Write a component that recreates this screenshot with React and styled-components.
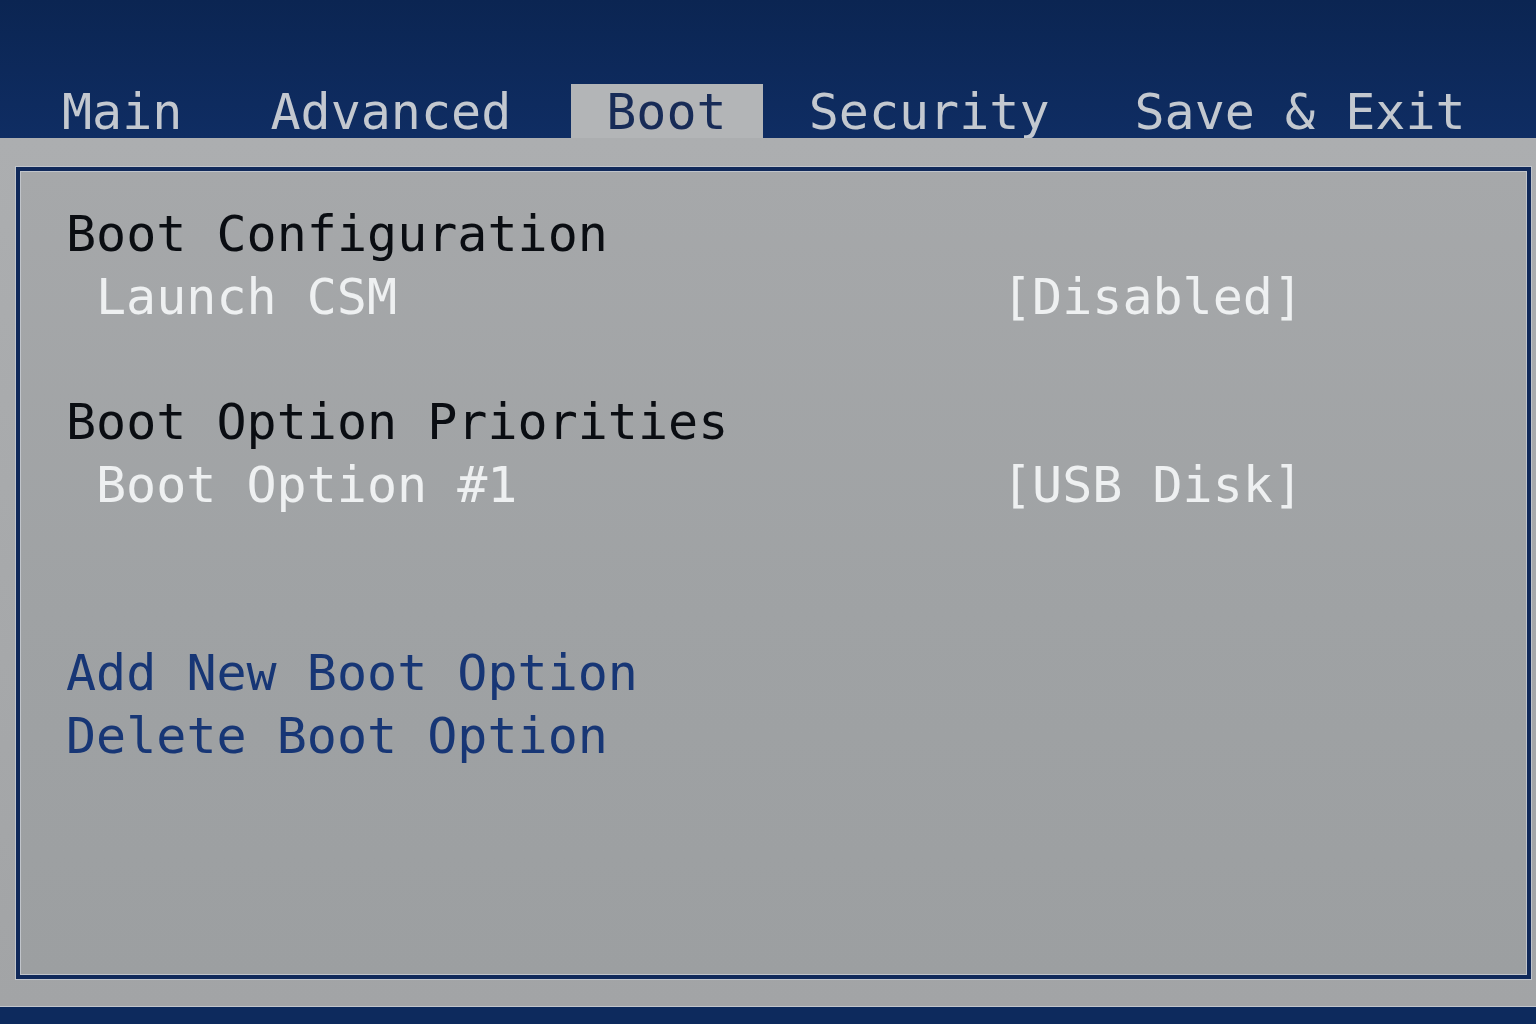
import React from 'react';
import styled, { createGlobalStyle } from 'styled-components';

const GlobalStyle = createGlobalStyle`
  html, body {
    margin: 0;
    padding: 0;
    background: #0e2b5f;
  }
`;

const Screen = styled.div`
  display: flex;
  flex-direction: column;
  width: 1536px;
  height: 1024px;
  overflow: hidden;
  font-family: "DejaVu Sans Mono", "Liberation Mono", monospace;
  font-size: 50px;
`;

const TabBar = styled.div`
  display: flex;
  align-items: flex-end;
  height: 138px;
  padding-left: 27px;
  box-sizing: border-box;
  background: linear-gradient(180deg, #0b2552 0%, #0f2d63 100%);
`;

const Tab = styled.div`
  height: 54px;
  margin-left: ${(props) => props.offset}px;
  padding: 1px 36px 0 35px;
  box-sizing: border-box;
  line-height: 54px;
  white-space: pre;
  color: ${(props) => (props.active ? '#172b57' : '#c3c8cf')};
  background: ${(props) => (props.active ? '#b3b5b7' : 'transparent')};
`;

const Body = styled.div`
  flex: 1;
  display: flex;
  padding: 29px 5px 27px 16px;
  background: linear-gradient(180deg, #acaeb0 0%, #a2a4a6 100%);
  border-bottom: 1px solid #c2c6cc;
`;

const Panel = styled.div`
  flex: 1;
  border: 4px solid #10295a;
  box-shadow: 0 0 0 1px #c0c4ca, inset 0 0 0 1px #c0c4ca;
  background: linear-gradient(180deg, #a6a8aa 0%, #9fa2a4 55%, #9c9fa1 100%);
  padding: 32px 40px 0 46px;
`;

const Lines = styled.div`
  display: grid;
  grid-template-columns: 936px auto;
  grid-auto-rows: 62.7px;
  line-height: 62.7px;
  white-space: pre;
`;

const Heading = styled.div`
  grid-column: 1 / 3;
  color: #0a0d12;
`;

const Label = styled.div`
  padding-left: 30px;
  color: #eef0f1;
`;

const Value = styled.div`
  color: #eef0f1;
`;

const Action = styled.div`
  grid-column: 1 / 3;
  color: #173675;
`;

const Spacer = styled.div`
  grid-column: 1 / 3;
`;

const FootBar = styled.div`
  height: 17px;
  background: #0d2a5d;
`;

const tabs = [
  { name: 'Main', offset: 0 },
  { name: 'Advanced', offset: 17 },
  { name: 'Boot', offset: 24 },
  { name: 'Security', offset: 11 },
  { name: 'Save & Exit', offset: 14 },
];

export default function App() {
  return (
    <>
      <GlobalStyle />
      <Screen>
        <TabBar>
          {tabs.map((t) => (
            <Tab key={t.name} offset={t.offset} active={t.name === 'Boot'}>
              {t.name}
            </Tab>
          ))}
        </TabBar>
        <Body>
          <Panel>
            <Lines>
              <Heading>Boot Configuration</Heading>
              <Label>Launch CSM</Label>
              <Value>[Disabled]</Value>
              <Spacer />
              <Heading>Boot Option Priorities</Heading>
              <Label>Boot Option #1</Label>
              <Value>[USB Disk]</Value>
              <Spacer />
              <Spacer />
              <Action>Add New Boot Option</Action>
              <Action>Delete Boot Option</Action>
            </Lines>
          </Panel>
        </Body>
        <FootBar />
      </Screen>
    </>
  );
}
